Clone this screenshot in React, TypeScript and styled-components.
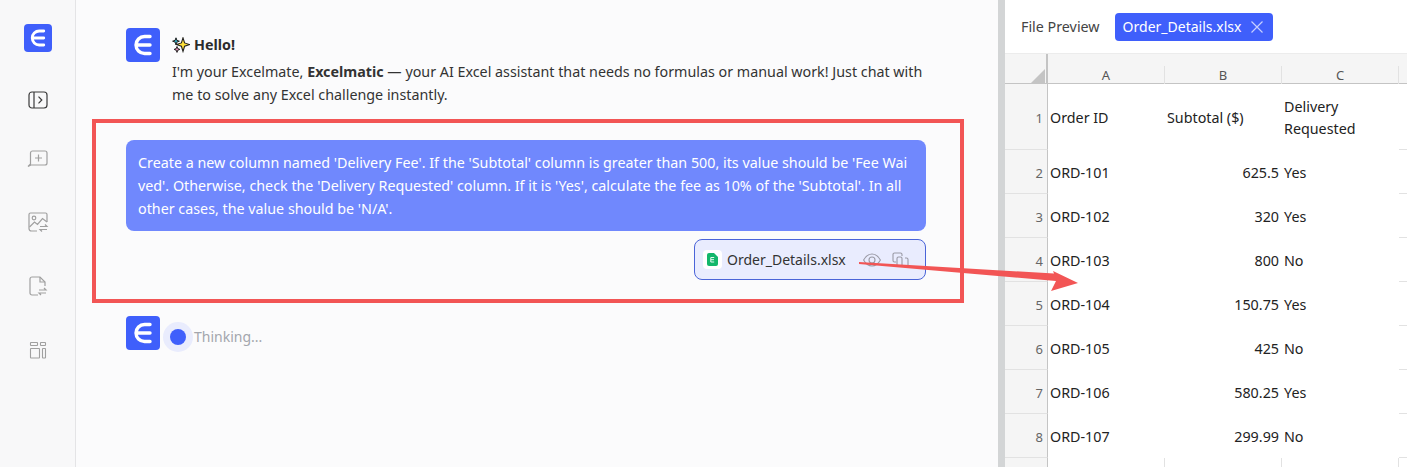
import styled, { createGlobalStyle } from 'styled-components'

const GlobalStyle = createGlobalStyle`
  html, body {
    margin: 0;
    padding: 0;
    height: 467px;
    overflow: hidden;
    background: #fbfbfc;
    font-family: "Noto Sans", "Liberation Sans", sans-serif;
  }
`

const rows = [
  ['2', 'ORD-101', '625.5', 'Yes'],
  ['3', 'ORD-102', '320', 'Yes'],
  ['4', 'ORD-103', '800', 'No'],
  ['5', 'ORD-104', '150.75', 'Yes'],
  ['6', 'ORD-105', '425', 'No'],
  ['7', 'ORD-106', '580.25', 'Yes'],
  ['8', 'ORD-107', '299.99', 'No'],
]

function LogoMark(props: { size: number }) {
  return (
    <LogoBox $size={props.size}>
      <svg width={props.size} height={props.size} viewBox="0 0 34 34" fill="none">
        <path
          d="M24 8.5h-5.5a8.5 8.5 0 0 0 0 17H24M11.5 17H24"
          stroke="#fff"
          strokeWidth="3.4"
          strokeLinecap="round"
        />
      </svg>
    </LogoBox>
  )
}

function App() {
  return (
    <Page>
      <GlobalStyle />
      <Sidebar>
        <LogoMark size={28} />
        <NavIcon $dark $top={37}>
          <svg width="20" height="20" viewBox="0 0 20 20" fill="none" stroke="currentColor" strokeWidth="1.2">
            <rect x="1" y="2" width="18" height="16" rx="3" />
            <path d="M6 2v16M10.500 6.700l3.300 3.300-3.300 3.300" />
          </svg>
        </NavIcon>
        <NavIcon $top={36}>
          <svg width="22" height="22" viewBox="0 0 22 22" fill="none" stroke="currentColor" strokeWidth="1.2">
            <path d="M5.500 4h12.500a2 2 0 0 1 2 2v10a2 2 0 0 1-2 2H4l-3 1.500 2.500-2.500V6a2 2 0 0 1 2-2z" />
            <path d="M11.500 7.500v7M8 11h7" />
          </svg>
        </NavIcon>
        <NavIcon $top={42}>
          <svg width="22" height="22" viewBox="0 0 22 22" fill="none" stroke="currentColor" strokeWidth="1.2">
            <path d="M10 20H4.500A2.500 2.500 0 0 1 2 17.500v-14A1.500 1.500 0 0 1 3.500 2h15A1.500 1.500 0 0 1 20 3.500V11" />
            <circle cx="7" cy="7" r="1.800" />
            <path d="M2.500 16l5-5 3 2.500 5-6 4.500 3.500M13 15.500h7l-2-2M20 18.500h-7l2 2" />
          </svg>
        </NavIcon>
        <NavIcon $top={42}>
          <svg width="22" height="22" viewBox="0 0 22 22" fill="none" stroke="currentColor" strokeWidth="1.2">
            <path d="M11 20H5a2 2 0 0 1-2-2V4a2 2 0 0 1 2-2h8l5 5v4" />
            <path d="M13 2v5h5M12 15h7l-2-2M19 18h-7l2 2" />
          </svg>
        </NavIcon>
        <NavIcon $top={42}>
          <svg width="20" height="22" viewBox="0 0 20 22" fill="none" stroke="currentColor" strokeWidth="1.1">
            <rect x="2.500" y="3.500" width="7" height="3" rx=".5" />
            <rect x="12.500" y="3.500" width="5" height="3" rx=".5" />
            <rect x="2.500" y="9.500" width="9" height="9.500" rx=".5" />
            <rect x="14.500" y="9.500" width="3" height="9.500" rx=".5" />
          </svg>
        </NavIcon>
      </Sidebar>

      <Chat>
        <Message>
          <LogoMark size={34} />
          <Greeting>
            <Hello>
              <svg width="18" height="16" viewBox="0 0 18 16">
                <path d="M11 .8l1.600 5.100 5 1.700-5 1.700-1.600 5.100-1.600-5.100-5-1.700 5-1.700z" fill="#ffe13c" stroke="#222" strokeWidth="1.100" />
                <path d="M4 .8l.9 2.500 2.500.9-2.500.9L4 7.600l-.9-2.500L.6 4.200l2.500-.9z" fill="#2aa5b8" stroke="#222" strokeWidth="1" />
                <path d="M5 9.500l.8 2.100 2.100.8-2.100.8L5 15.400l-.8-2.200-2.100-.8 2.100-.8z" fill="#e58ab5" stroke="#222" strokeWidth="1" />
              </svg>
              Hello!
            </Hello>
            <Intro>
              I'm your Excelmate, <strong>Excelmatic</strong> — your AI Excel assistant that needs no formulas or manual work! Just chat with me to solve any Excel challenge instantly.
            </Intro>
          </Greeting>
        </Message>

        <Highlight>
          <Bubble>
            Create a new column named 'Delivery Fee'. If the 'Subtotal' column is greater than 500, its value should be 'Fee Wai
            <br />
            ved'. Otherwise, check the 'Delivery Requested' column. If it is 'Yes', calculate the fee as 10% of the 'Subtotal'. In all other cases, the value should be 'N/A'.
          </Bubble>
          <Attachment>
            <FileBadge>
              <svg width="11" height="13" viewBox="0 0 11 13">
                <path d="M2 0h5l4 4v7a2 2 0 0 1-2 2H2a2 2 0 0 1-2-2V2a2 2 0 0 1 2-2z" fill="#12b76a" />
                <path d="M7.200 4.500H3.800v4.500h3.400M3.800 6.700h3.200" stroke="#fff" strokeWidth=".9" fill="none" />
              </svg>
            </FileBadge>
            <FileName>Order_Details.xlsx</FileName>
            <FileActions>
              <svg width="18" height="14" viewBox="0 0 18 14" fill="none" stroke="currentColor" strokeWidth="1.100">
                <path d="M.6 7C2.800 3 5.700 1 9 1s6.200 2 8.400 6c-2.200 4-5.100 6-8.400 6S2.800 11 .6 7z" />
                <circle cx="9" cy="7" r="3" />
              </svg>
              <svg width="17" height="16" viewBox="0 0 17 16" fill="none" stroke="currentColor" strokeWidth="1.100">
                <path d="M4 10H2.500A1.500 1.500 0 0 1 1 8.500v-6A1.500 1.500 0 0 1 2.500 1h6A1.500 1.500 0 0 1 10 2.500V4" />
                <path d="M5 15V6.500A1.500 1.500 0 0 1 6.500 5h2A1.500 1.500 0 0 1 10 6.500V15M13 6h1.500A1.500 1.500 0 0 1 16 7.500V15" />
              </svg>
            </FileActions>
          </Attachment>
        </Highlight>

        <Thinking>
          <LogoMark size={34} />
          <Pulse />
          <ThinkingLabel>Thinking...</ThinkingLabel>
        </Thinking>
      </Chat>

      <Splitter />

      <Preview>
        <PreviewHeader>
          <PreviewTitle>File Preview</PreviewTitle>
          <FileTab>
            Order_Details.xlsx
            <svg width="12" height="12" viewBox="0 0 12 12" fill="none" stroke="#c6cfff" strokeWidth="1.200">
              <path d="M.5.5l11 11M11.500.5l-11 11" />
            </svg>
          </FileTab>
        </PreviewHeader>
        <Sheet>
          <ColumnHeads>
            <Corner>
              <svg width="14" height="14" viewBox="0 0 14 14">
                <path d="M14 0v14H0z" fill="#c4c4c4" />
              </svg>
            </Corner>
            <ColumnHead>A</ColumnHead>
            <ColumnHead>B</ColumnHead>
            <ColumnHead>C</ColumnHead>
          </ColumnHeads>
          <SheetRow $height={66}>
            <RowHead>1</RowHead>
            <Cell>Order ID</Cell>
            <Cell>Subtotal ($)</Cell>
            <Cell $wrap>Delivery Requested</Cell>
            <EdgeCell />
          </SheetRow>
          {rows.map((row) => (
            <SheetRow key={row[0]} $height={44}>
              <RowHead>{row[0]}</RowHead>
              <Cell>{row[1]}</Cell>
              <Cell $right>{row[2]}</Cell>
              <Cell>{row[3]}</Cell>
              <EdgeCell />
            </SheetRow>
          ))}
          <SheetRow $height={24}>
            <RowHead>9</RowHead>
            <EmptyCell />
            <EmptyCell />
            <EmptyCell />
          </SheetRow>
        </Sheet>
      </Preview>

      <Arrow width="230" height="45" viewBox="0 0 230 45">
        <polygon
          points="4,7 199,18.500 198,16 223,28 196,36 201,26 4,9"
          fill="#f25555"
        />
      </Arrow>
    </Page>
  )
}

const Page = styled.div`
  position: relative;
  display: flex;
  width: 1407px;
  height: 467px;
  overflow: hidden;
  color: #333;
`

const Sidebar = styled.nav`
  flex: none;
  width: 75px;
  padding-top: 24px;
  display: flex;
  flex-direction: column;
  align-items: center;
  background: #f8f8f9;
  border-right: 1px solid #e4e4e6;
`

const LogoBox = styled.div<{ $size: number }>`
  flex: none;
  width: ${(p) => p.$size}px;
  height: ${(p) => p.$size}px;
  border-radius: 4px;
  background: #3f5ffb;

  svg {
    display: block;
  }
`

const NavIcon = styled.span<{ $dark?: boolean; $top: number }>`
  display: flex;
  align-items: center;
  height: 22px;
  margin-top: ${(p) => p.$top}px;
  color: ${(p) => (p.$dark ? '#3a3a3a' : '#a0a0a0')};
`

const Chat = styled.main`
  flex: 1;
  min-width: 0;
  padding-top: 28px;
  background: #fbfbfc;
`

const Message = styled.div`
  display: flex;
  gap: 12px;
  margin-left: 50px;
  width: 800px;
`

const Greeting = styled.div`
  padding-top: 5px;
  font-size: 14.300px;
  line-height: 23px;
`

const Hello = styled.div`
  display: flex;
  align-items: center;
  gap: 4px;
  font-weight: 700;
  color: #2c2c2c;
`

const Intro = styled.p`
  margin: 4px 0 0;
  width: 752px;

  strong {
    font-weight: 700;
  }
`

const Highlight = styled.section`
  margin: 13px 0 0 16px;
  width: 872px;
  height: 184px;
  box-sizing: border-box;
  padding: 17px 34px 0 0;
  border: 4px solid #f25555;
  display: flex;
  flex-direction: column;
  align-items: flex-end;
`

const Bubble = styled.div`
  width: 800px;
  height: 91px;
  box-sizing: border-box;
  padding: 11px 12px;
  background: #7088fd;
  border-radius: 8px;
  color: #fff;
  font-size: 14.300px;
  line-height: 23px;
`

const Attachment = styled.div`
  margin-top: 8px;
  width: 232px;
  height: 41px;
  box-sizing: border-box;
  display: flex;
  align-items: center;
  padding: 0 8px;
  background: #e9ecfe;
  border: 1px solid #4a64d8;
  border-radius: 8px;
`

const FileBadge = styled.span`
  display: flex;
  align-items: center;
  justify-content: center;
  width: 19px;
  height: 19px;
  background: #fff;
  border-radius: 4px;
  margin-right: 5px;
`

const FileName = styled.span`
  font-size: 14px;
  color: #333;
`

const FileActions = styled.span`
  display: flex;
  align-items: center;
  gap: 11px;
  margin-left: 17px;
  color: #9a9aa5;
`

const Thinking = styled.div`
  display: flex;
  align-items: center;
  margin: 13px 0 0 50px;
`

const Pulse = styled.span`
  width: 16px;
  height: 16px;
  margin: 8px 8px 0 10px;
  border-radius: 50%;
  background: #3f5ffb;
  box-shadow: 0 0 0 7px #e9ecfd;
`

const ThinkingLabel = styled.span`
  padding-top: 7px;
  font-size: 14px;
  color: #a3a6ad;
`

const Splitter = styled.div`
  flex: none;
  width: 7px;
  background: #d3d5d6;
`

const Preview = styled.aside`
  flex: none;
  width: 402px;
  background: #fff;
`

const PreviewHeader = styled.header`
  height: 54px;
  box-sizing: border-box;
  display: flex;
  align-items: center;
  gap: 15px;
  padding-left: 16px;
  border-bottom: 1px solid #ececec;
`

const PreviewTitle = styled.span`
  font-size: 14.300px;
  color: #444;
`

const FileTab = styled.span`
  display: flex;
  align-items: center;
  gap: 10px;
  height: 28px;
  padding: 0 10px 0 8px;
  border-radius: 4px;
  background: #3f5ffb;
  color: #fff;
  font-size: 14px;
`

const Sheet = styled.div`
  font-size: 14.300px;
  color: #222;
`

const ColumnHeads = styled.div`
  display: grid;
  grid-template-columns: 43px repeat(3, 117px) 1fr;
  height: 30px;
  box-sizing: border-box;
  background: #f5f5f5;
  border-bottom: 1px solid #c4c4c4;
`

const Corner = styled.div`
  display: flex;
  align-items: flex-end;
  justify-content: flex-end;
  padding: 0 1px 1px 0;
  border-right: 2px solid #c4c4c4;
  box-sizing: border-box;
`

const ColumnHead = styled.div`
  display: flex;
  align-items: center;
  justify-content: center;
  font-size: 13px;
  color: #555;
  border-right: 1px solid #e2e2e2;
  margin-top: 12px;
`

const SheetRow = styled.div<{ $height: number }>`
  display: grid;
  grid-template-columns: 43px repeat(3, 117px) 1fr;
  height: ${(p) => p.$height}px;
`

const RowHead = styled.div`
  display: flex;
  align-items: center;
  justify-content: flex-end;
  box-sizing: border-box;
  padding: 2px 4px 0 0;
  background: #f5f5f5;
  border-right: 1px solid #c4c4c4;
  border-bottom: 1px solid #e2e2e2;
  font-size: 13px;
  color: #666;
`

const Cell = styled.div<{ $right?: boolean; $wrap?: boolean }>`
  display: flex;
  align-items: center;
  padding: 2px ${(p) => (p.$right ? '3px' : '2px')} 0 2px;
  line-height: 22px;
  justify-content: ${(p) => (p.$right ? 'flex-end' : 'flex-start')};
  width: ${(p) => (p.$wrap ? '90px' : 'auto')};
`

const EdgeCell = styled.div`
  border-bottom: 1px solid #e2e2e2;
`

const EmptyCell = styled.div`
  border-right: 1px solid #e2e2e2;
`

const Arrow = styled.svg`
  position: absolute;
  left: 855px;
  top: 255px;
`

export default App
